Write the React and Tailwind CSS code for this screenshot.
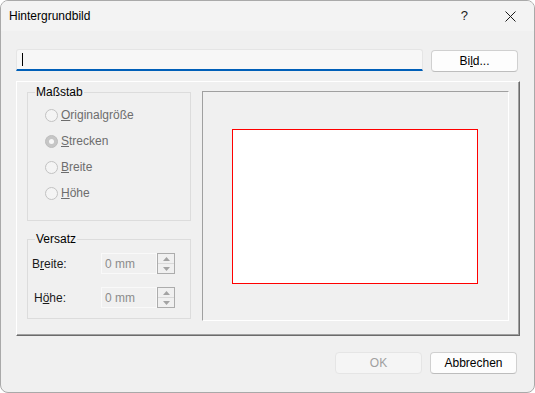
import { useState } from "react";

function Radio({ label, checked }) {
  return (
    <div className="flex items-center h-[26px] pl-[17px]">
      <span
        className={
          "w-[13px] h-[13px] rounded-full border flex items-center justify-center " +
          (checked ? "bg-[#c6c6c6] border-[#bdbdbd]" : "bg-[#f4f4f4] border-[#c2c2c2]")
        }
      >
        {checked && <span className="w-[5px] h-[5px] rounded-full bg-[#f7f7f7]" />}
      </span>
      <span className="ml-[3px] text-[#6d6d6d] leading-[14px]">
        <u>{label[0]}</u>
        {label.slice(1)}
      </span>
    </div>
  );
}

function Spin({ value }) {
  return (
    <div className="flex h-[21px]">
      <div className="w-[56px] h-full border border-[#f9f9f9] flex items-center pl-[3px] text-[#8c8c8c]">
        {value}
      </div>
      <div className="w-[18px] h-full border border-[#acacac] flex flex-col bg-[#f0f0f0]">
        <div className="flex-1 border-b border-[#d9d9d9] flex items-center justify-center">
          <svg width="7" height="4" viewBox="0 0 7 4">
            <path d="M0 4 L3.5 0 L7 4 Z" fill="#a3a3a3" />
          </svg>
        </div>
        <div className="flex-1 flex items-center justify-center">
          <svg width="7" height="4" viewBox="0 0 7 4">
            <path d="M0 0 L3.5 4 L7 0 Z" fill="#a3a3a3" />
          </svg>
        </div>
      </div>
    </div>
  );
}

function GroupBox({ title, className, children }) {
  return (
    <div className={"relative border border-[#dcdcdc] " + className}>
      <span className="absolute left-[7px] -top-[8px] px-[1px] bg-[#f0f0f0] leading-[14px] text-black">
        {title}
      </span>
      {children}
    </div>
  );
}

export default function App() {
  const [path, setPath] = useState("");

  return (
    <div className="w-[535px] h-[393px] bg-[#f0f0f0] border border-[#a9a9a9] rounded-[8px] overflow-hidden text-[12px] text-black font-['Liberation_Sans',Arial,sans-serif]">
      {/* Titelleiste */}
      <div className="h-[30px] bg-[#f3f3f3] flex items-center pl-[8px]">
        <span className="leading-[14px]">Hintergrundbild</span>
        <span className="ml-auto mr-[37px] text-[13px] text-[#1a1a1a]">?</span>
        <svg width="11" height="11" viewBox="0 0 11 11" className="mr-[18px]">
          <path d="M0.5 0.5 L10.5 10.5 M10.5 0.5 L0.5 10.5" stroke="#1a1a1a" strokeWidth="1" />
        </svg>
      </div>

      {/* Pfad + Bild... */}
      <div className="flex items-start pl-[15px] mt-[18px] gap-[8px]">
        <div className="relative w-[407px] h-[22px] bg-[#f7f7f7] border border-[#e5e5e5] border-b-2 border-b-[#005fb8] rounded-t-[3px] flex items-center">
          <input
            value={path}
            onChange={(e) => setPath(e.target.value)}
            className="w-full h-full bg-transparent outline-none pl-[6px]"
          />
          <span className="absolute left-[5px] top-[3px] w-px h-[13px] bg-black" />
        </div>
        <button className="mt-[1px] w-[87px] h-[22px] bg-[#fdfdfd] border border-[#d0d0d0] border-b-[#bdbdbd] rounded-[4px] leading-[14px]">
          Bi<u>l</u>d...
        </button>
      </div>

      {/* Rahmen */}
      <div className="mt-[9px] ml-[15px] w-[504px] h-[255px] border-t border-l border-white border-r border-b border-r-[#6b6b6b] border-b-[#6b6b6b] shadow-[inset_-1px_-1px_0_#a0a0a0] flex items-start pl-[10px] pt-[9px]">
        <div className="w-[164px] mt-[1px] flex flex-col">
          <GroupBox title="Maßstab" className="h-[129px] pt-[9px]">
            <Radio label="Originalgröße" />
            <Radio label="Strecken" checked />
            <Radio label="Breite" />
            <Radio label="Höhe" />
          </GroupBox>

          <GroupBox title="Versatz" className="h-[80px] mt-[18px] pt-[13px]">
            <div className="flex items-center">
              <span className="w-[73px] pl-[4px] text-[#1a1a1a]">
                B<u>r</u>eite:
              </span>
              <Spin value="0 mm" />
            </div>
            <div className="flex items-center mt-[13px]">
              <span className="w-[73px] pl-[6px] text-[#1a1a1a]">
                H<u>ö</u>he:
              </span>
              <Spin value="0 mm" />
            </div>
          </GroupBox>
        </div>

        <div className="ml-[11px] w-[307px] h-[230px] border-t border-l border-[#a0a0a0] border-r border-b border-r-white border-b-white flex items-center justify-center">
          <div className="w-[246px] h-[155px] bg-white border border-[#ff0000] -ml-px" />
        </div>
      </div>

      {/* Schaltflächen */}
      <div className="flex justify-end gap-[8px] pr-[17px] mt-[16px]">
        <button
          disabled
          className="w-[87px] h-[22px] bg-[#f5f5f5] border border-[#e5e5e5] rounded-[4px] text-[#a0a0a0] leading-[14px]"
        >
          OK
        </button>
        <button className="w-[87px] h-[22px] bg-[#fdfdfd] border border-[#d0d0d0] border-b-[#bdbdbd] rounded-[4px] leading-[14px]">
          Abbrechen
        </button>
      </div>
    </div>
  );
}
